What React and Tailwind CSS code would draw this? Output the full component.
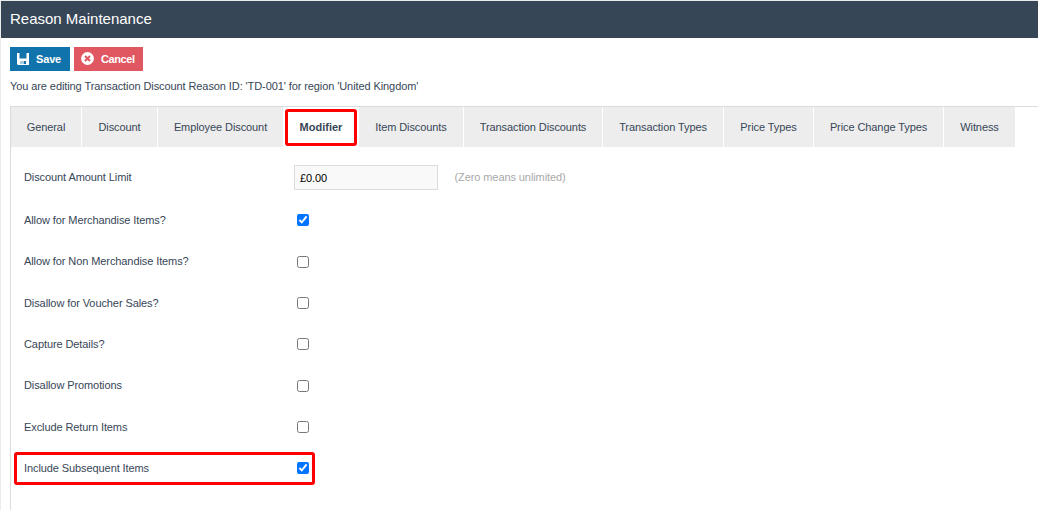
import React from 'react';

const tabs = [
  { label: 'General', width: 'w-[70px]' },
  { label: 'Discount', width: 'w-[75px]' },
  { label: 'Employee Discount', width: 'w-[125px]' },
  { label: 'Modifier', width: 'w-[74px]', active: true },
  { label: 'Item Discounts', width: 'w-[104px]' },
  { label: 'Transaction Discounts', width: 'w-[138px]' },
  { label: 'Transaction Types', width: 'w-[120px]' },
  { label: 'Price Types', width: 'w-[89px]' },
  { label: 'Price Change Types', width: 'w-[129px]' },
  { label: 'Witness', width: 'w-[71px]' },
];

const options = [
  { label: 'Allow for Merchandise Items?', checked: true },
  { label: 'Allow for Non Merchandise Items?' },
  { label: 'Disallow for Voucher Sales?' },
  { label: 'Capture Details?' },
  { label: 'Disallow Promotions' },
  { label: 'Exclude Return Items' },
  { label: 'Include Subsequent Items', checked: true, highlight: true },
];

const SaveIcon = () => (
  <svg width="12" height="12" viewBox="0 0 12 12" className="shrink-0 mb-px">
    <path fill="#fff" fillRule="evenodd" d="M0 0h12v12H1L0 11zM2.5 0v5.5h7V0zM3 8v3h6V8z" />
    <path fill="#a9cbe0" d="M3 8h4v3H3z" />
  </svg>
);

const CancelIcon = () => (
  <svg width="13" height="13" viewBox="0 0 13 13" className="shrink-0 mb-[2px]">
    <circle cx="6.5" cy="6.5" r="6.4" fill="#fff" />
    <path d="M4 4l5 5M9 4L4 9" stroke="#e15761" strokeWidth="2" />
  </svg>
);

// Red marker frame around the thing being pointed out
const Highlight = ({ className }) => (
  <span className={`absolute border-3 border-[#fe0000] rounded-[3px] pointer-events-none ${className}`} />
);

const App = () => {
  return (
    <div className="h-[510px] overflow-hidden bg-white border-t border-l border-[#ebebeb] font-['Liberation_Sans',Arial,sans-serif] text-[11px] leading-4 tracking-[-0.09px] text-[#374657]">
      <header className="h-[37px] bg-[#374657] pl-[9px] flex items-center text-white text-[15px] tracking-normal">
        <h1 className="-mt-px">Reason Maintenance</h1>
      </header>

      {/* Toolbar */}
      <div className="flex gap-1 pl-[9px] pt-[9px]">
        <button className="w-[60px] h-6 pl-[7px] flex items-center gap-[7px] bg-[#1173ab] text-white font-bold tracking-[-0.15px]">
          <SaveIcon />
          Save
        </button>
        <button className="w-[69px] h-6 pl-[7px] flex items-center gap-[7px] bg-[#e15761] text-white font-bold tracking-[-0.4px]">
          <CancelIcon />
          Cancel
        </button>
      </div>

      <p className="pl-[9px] mt-[7px] h-7">
        You are editing Transaction Discount Reason ID: 'TD-001' for region 'United Kingdom'
      </p>

      {/* Tab panel */}
      <div className="ml-[9px] h-[404px] border-t border-l border-[#dcdcdc]">
        <nav className="flex gap-px">
          {tabs.map((tab) => (
            <div
              key={tab.label}
              className={`relative shrink-0 h-10 flex items-center justify-center whitespace-nowrap ${tab.width} ${
                tab.active ? 'bg-white font-bold tracking-normal' : 'bg-[#ededed]'
              }`}
            >
              {tab.label}
              {tab.active && <Highlight className="left-[1px] top-[2px] w-[72px] h-[37px]" />}
            </div>
          ))}
        </nav>

        <div className="pl-[13px] pt-[18px]">
          <div className="flex h-[34.5px]">
            <label className="w-[270px] pt-[4px]">Discount Amount Limit</label>
            <input
              type="text"
              defaultValue="£0.00"
              className="w-[144px] h-[25px] px-[5px] bg-[#f9f9f9] border border-[#dcdcdc] text-black"
            />
            <span className="ml-[16.5px] pt-[4px] text-[#a9a9a9]">(Zero means unlimited)</span>
          </div>

          {options.map((option) => (
            <div key={option.label} className="relative h-[41.33px] flex items-center">
              <label className="w-[270px]">{option.label}</label>
              <input type="checkbox" defaultChecked={option.checked} className="ml-[3px] mt-[0.5px] w-3 h-3" />
              {option.highlight && <Highlight className="-left-[10px] top-[4.5px] w-[301px] h-[33px]" />}
            </div>
          ))}
        </div>
      </div>
    </div>
  );
};

export default App;
